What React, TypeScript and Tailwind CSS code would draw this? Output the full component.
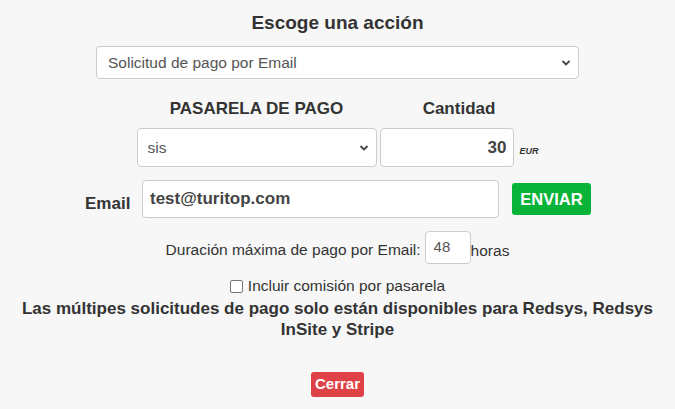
function Chevron() {
  return (
    <svg width="10" height="7" viewBox="0 0 10 7" className="pointer-events-none absolute right-[8px] top-1/2 -translate-y-1/2">
      <path d="M1.5 1.5 L5 5 L8.5 1.5" fill="none" stroke="#444" strokeWidth="1.8" />
    </svg>
  )
}

export default function App() {
  return (
    <div className="flex h-[409px] w-[675px] flex-col items-center bg-[#f7f7f7] text-[#333] [font-family:'Liberation_Sans',Arial,sans-serif]">
      <h1 className="mt-[12px] text-[19px] font-bold leading-[22px]">Escoge una acción</h1>

      <div className="relative mt-[12px] h-[33px] w-[483px]">
        <select className="h-full w-full appearance-none rounded-[4px] border border-[#ccc] bg-white pl-[11px] text-[15.5px] text-[#555] outline-none">
          <option>Solicitud de pago por Email</option>
        </select>
        <Chevron />
      </div>

      <div className="mt-[20px] flex w-[402px] gap-[3px]">
        <div className="flex w-[240px] flex-col items-center">
          <div className="text-[17px] font-bold leading-[20px]">PASARELA DE PAGO</div>
          <div className="relative mt-[9px] h-[39px] w-[240px]">
            <select className="h-full w-full appearance-none rounded-[4px] border border-[#ccc] bg-white pl-[10px] text-[15.5px] text-[#555] outline-none">
              <option>sis</option>
            </select>
            <Chevron />
          </div>
        </div>
        <div className="flex w-[159px] flex-col items-center">
          <div className="text-[17px] font-bold leading-[20px]">Cantidad</div>
          <div className="mt-[9px] flex items-end">
            <div className="flex h-[39px] w-[134px] items-center justify-end rounded-[4px] border border-[#ccc] bg-white pr-[6px] text-[17px] font-bold text-[#444]">
              30
            </div>
            <span className="mb-[9px] ml-[6px] text-[9px] font-bold italic text-[#333]">EUR</span>
          </div>
        </div>
      </div>

      <div className="mt-[13px] flex w-[507px] items-start">
        <span className="mt-[14px] w-[58px] pl-[1px] text-[17px] font-bold leading-[20px]">Email</span>
        <div className="flex h-[38px] w-[357px] items-center rounded-[4px] border border-[#ccc] bg-white pl-[7px] pb-[1px] text-[17px] font-bold text-[#444]">
          test@turitop.com
        </div>
        <button className="ml-[13px] mt-[3px] h-[32px] w-[79px] rounded-[3px] bg-[#08b33a] text-[16.5px] font-bold text-white">ENVIAR</button>
      </div>

      <div className="mt-[13px] flex items-center text-[15.5px] text-[#333]">
        <span className="mt-[4px]">Duración máxima de pago por Email:</span>
        <div className="ml-[4px] flex h-[33px] w-[46px] items-start rounded-[4px] border border-[#ccc] bg-white pl-[8px] pt-[4px] text-[15px] text-[#555]">
          48
        </div>
        <span className="mt-[6px]">horas</span>
      </div>

      <div className="mt-[14px] flex items-center text-[15.5px] leading-[16px] text-[#333]">
        <span className="mr-[5px] h-[13px] w-[13px] rounded-[2px] border border-[#767676] bg-white" />
        Incluir comisión por pasarela
      </div>

      <p className="mt-[4px] w-[645px] text-center text-[17px] font-bold leading-[21px]">
        Las múltipes solicitudes de pago solo están disponibles para Redsys, Redsys InSite y Stripe
      </p>

      <button className="mt-[32px] h-[25px] w-[53px] rounded-[3px] bg-[#df4246] text-[15px] font-bold text-white">Cerrar</button>
    </div>
  )
}
